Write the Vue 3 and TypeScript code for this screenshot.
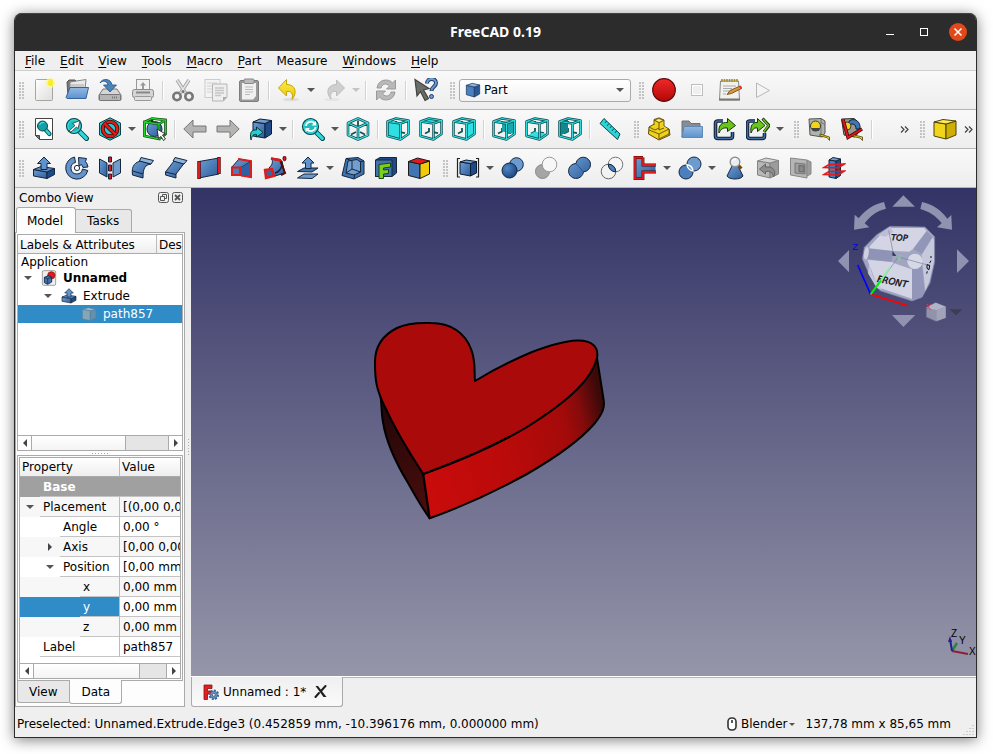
<script setup lang="ts">
import { ref } from 'vue'

interface Tool {
  kind: 'grip' | 'sep' | 'btn' | 'combo' | 'more' | 'space'
  icon?: string
  label?: string
  menu?: boolean
  off?: boolean
}

const btn = (icon: string, label: string, menu = false, off = false): Tool => ({ kind: 'btn', icon, label, menu, off })
const sep: Tool = { kind: 'sep' }
const grip: Tool = { kind: 'grip' }
const more: Tool = { kind: 'more', label: 'More tools' }
const space: Tool = { kind: 'space' }

const DARK = '#15263d'

/* Solid cube seen from the front right */
const cube = (front: string, top: string, side: string, line: string) =>
  `<g stroke="${line}" stroke-width="1.1" stroke-linejoin="round"><path fill="${front}" d="M2 5L14 7.500V22.500L2 19Z"/><path fill="${side}" d="M14 7.500L22 4.500V18L14 22.500Z"/><path fill="${top}" d="M2 5L11 2L22 4.500L14 7.500Z"/></g>`

/* Wireframe cube with one highlighted face */
const wire = (face: string, fill = '#30dfe1') => {
  const back = 'M10 4V7M10 11V14.500L6 16.500M14 15.200L19 16.200'
  const edges = 'M1.500 4.500L14.500 6.500V22.500L1.500 19ZM14.500 6.500L22.500 3.500V17L14.500 22.500M1.500 4.500L10 1.500L22.500 3.500'
  return `<path d="${back}" fill="none" stroke="#0d5557" stroke-width="1.800"/>` +
    `<path d="${face}" fill="${fill}"/><path d="${edges}" fill="none" stroke="#0a4c4f" stroke-width="2.500" stroke-linejoin="round"/><path d="${edges}" fill="none" stroke="#2fdadc" stroke-width="1.100"/>`
}

const lens = (cx: number, cy: number, r: number, inner: string) =>
  `<path d="M${cx + r - 2} ${cy + r - 2}L21.500 21.500" stroke="#06484a" stroke-width="5" stroke-linecap="round"/><path d="M${cx + r - 2} ${cy + r - 2}L21.300 21.300" stroke="#2bdadd" stroke-width="3.200" stroke-linecap="round"/><circle cx="${cx}" cy="${cy}" r="${r}" fill="#1fbcc0" stroke="#06484a" stroke-width="1.200"/><circle cx="${cx}" cy="${cy}" r="${r - 1.4}" fill="none" stroke="#3fe3e5" stroke-width=".9"/>${inner}`

const icons: Record<string, string> = {
  new: '<rect x="3.500" y="1.500" width="17" height="21" rx="1" fill="url(#gPaper)" stroke="#a5a5a2"/><circle cx="18.500" cy="5" r="5" fill="#fff99a" opacity=".7"/><circle cx="18.500" cy="5" r="3" fill="#f8ee20"/>',
  open: '<path d="M2 4L4 2H10L12 4H20V19H3Z" fill="#777" stroke="#555"/><path d="M5 4L21 1.500L20 12H5Z" fill="#e9e9e9" stroke="#888"/><path d="M6 7H19M6 9H19" stroke="#aaa"/><path d="M1 19.500L5 9.500H23.500L21 20.500H2Z" fill="url(#gBlueLight)" stroke="#33629c"/>',
  save: '<path d="M5 11H19L23 17V22H1V17Z" fill="#d6d6d6" stroke="#777"/><rect x="1.500" y="16.500" width="21" height="6" rx="1" fill="#b5b5b5" stroke="#777"/><path d="M14 19.500H20" stroke="#777" stroke-width="2" stroke-dasharray="1 1"/><path d="M2 5C4 0 13 0 14 7H18.500L12 14L5.500 7H10C9 3 5 2 2 5Z" fill="#4b83bb" stroke="#265080" stroke-width=".8"/>',
  print: '<rect x="5.500" y="1.500" width="13" height="11" fill="#f2f2f2" stroke="#999"/><path d="M12 4L15 7.500H13V11H11V7.500H9Z" fill="#999"/><rect x="1.500" y="11.500" width="21" height="8" rx="2" fill="#d5d5d5" stroke="#8c8c8c"/><path d="M5 14.500H19" stroke="#888" stroke-width="2"/><rect x="3.500" y="18.500" width="17" height="4" rx="1" fill="#e0e0e0" stroke="#999"/>',
  cut: '<path d="M6 2L14.500 15M18 2L9.500 15" stroke="#a3a3a3" stroke-width="3.400"/><path d="M6 2L14.500 15M18 2L9.500 15" stroke="#e4e4e4" stroke-width="1.600"/><circle cx="6" cy="18.500" r="3.700" fill="none" stroke="#777" stroke-width="2.600"/><circle cx="18" cy="18.500" r="3.700" fill="none" stroke="#777" stroke-width="2.600"/><circle cx="12" cy="13.500" r="1.500" fill="#777"/>',
  copy: '<rect x="1" y="1.500" width="15" height="18" fill="#f3f3f3" stroke="#ccc"/><path d="M3 5H13M3 8H13M3 11H8M3 14H8" stroke="#d0d0d0"/><path d="M8.500 6H23V19L19.500 23H8.500Z" fill="#eee" stroke="#b5b5b5"/><path d="M11 10H20M11 12.500H20M11 15H20M11 17.500H17" stroke="#c6c6c6" stroke-width="1.500"/><path d="M19 23V19H23Z" fill="#aaa"/>',
  paste: '<rect x="2.500" y="2.500" width="19" height="21" rx="1.500" fill="#9a9a9a" stroke="#7d7d7d"/><path d="M5 5H19V18L16 21.500H5Z" fill="#f0f0f0"/><rect x="7" y="1" width="10" height="4.500" rx="1" fill="#bbb" stroke="#888"/><path d="M8 9H16M8 11.500H16M8 14H16M8 16.500H13" stroke="#bbb"/>',
  undo: '<ellipse cx="14" cy="21.500" rx="8" ry="1.800" fill="#ddd"/><path d="M1.500 10L9.500 1.500V6.500C18 6.500 21 14 15 21.500C16.500 15 14 13 9.500 13.500V18Z" fill="url(#gYellow)" stroke="#c6a405"/>',
  redo: '<ellipse cx="10" cy="21.500" rx="8" ry="1.500" fill="#e4e4e4"/><path d="M22.500 10L14.500 2V6.500C6 6.500 3 14 9 21C7.500 15 10 13 14.500 13.500V18Z" fill="#cfcfcf" stroke="#bdbdbd"/>',
  refresh: '<path d="M3 10C4 1 15 0 18.500 5L21.500 2V11H12.500L15.500 8C12 4.500 8 6 7 10Z" fill="#b9b9b9" stroke="#999"/><path d="M21 14C20 23 9 24 5.500 19L2.500 22V13H11.500L8.500 16C12 19.500 16 18 17 14Z" fill="#b9b9b9" stroke="#999"/>',
  whats: '<path d="M1 1.500L15 10.500L9.500 12L14.500 20.500L11 22.500L6.500 13.500L3 18Z" fill="#6a6d68" stroke="#3f423d" stroke-width="1.200"/><path d="M13 5.500C13 -.5 22 -.5 22 5C22 9 17.500 8.500 17.500 13" fill="none" stroke="#1c3e6a" stroke-width="4"/><path d="M13 5.500C13 -.5 22 -.5 22 5C22 9 17.500 8.500 17.500 12.500" fill="none" stroke="#6d9bd0" stroke-width="2"/><circle cx="17.500" cy="18.500" r="2" fill="#6d9bd0" stroke="#1c3e6a"/>',
  part: cube('#4a80bd', '#8fb3dc', '#2a5796', '#1b3a63'),
  record: '<circle cx="12" cy="12" r="11.300" fill="url(#gRed)" stroke="#5d0a0a" stroke-width="1.200"/>',
  stop: '<rect x="6.500" y="6.500" width="11" height="11" fill="#efefef" stroke="#bdbdbd"/><rect x="7.500" y="7.500" width="9" height="9" fill="none" stroke="#fff"/>',
  macros: '<path d="M2.500 3H20.500L21.500 22H1.500Z" fill="#f1f1ee" stroke="#888a85"/><path d="M1 21.500H22" stroke="#777" stroke-width="2"/><path d="M4 1V4M6.500 1V4M9 1V4M11.500 1V4M14 1V4M16.500 1V4M19 1V4" stroke="#a8902a" stroke-width="1.600"/><path d="M5 8H18M5 10.500H14M5 13H12M5 16H8" stroke="#aaa"/><path d="M9 16.500L12 12.500L22 8L23.500 10.500L13.500 15.500Z" fill="#d9963a" stroke="#6b4410" stroke-width=".8"/><path d="M21 8.500L23 7.500L24 10L22.500 11Z" fill="#e03030"/>',
  play: '<path d="M5.500 5L18.500 12.500L5.500 19.500Z" fill="#f4f4f4" stroke="#b8b8b8"/>',

  fitall: '<path d="M3.500 1.500H20.500V22.500H7.500L3.500 18.500Z" fill="#fff" stroke="#444"/><path d="M3.500 18.500H7.500V22.500Z" fill="#777" stroke="#444"/><path d="M13 12L17.500 17" stroke="#06484a" stroke-width="4.200" stroke-linecap="round"/><path d="M13 12L17.300 16.800" stroke="#2bd5d8" stroke-width="2.600" stroke-linecap="round"/><circle cx="10.500" cy="9" r="5" fill="#17a0a4" stroke="#06484a"/><path d="M7.500 8A4 4 0 0 1 12 5.500" fill="none" stroke="#56eef0"/>',
  fitsel: lens(9, 9, 7.500, '<path d="M4 14L10 8.500L7.500 6.500L15 3.500L13 11.500L11.500 10L6 15Z" fill="#fff" stroke="#222" stroke-width=".7"/>'),
  style: '<path d="M12 .8L22.500 6V18L12 23.200L1.500 18V6Z" fill="#25c8cc" stroke="#064446"/><circle cx="12" cy="12" r="7.300" fill="none" stroke="#3a0505" stroke-width="4"/><circle cx="12" cy="12" r="7.300" fill="none" stroke="#e01b1b" stroke-width="2.500"/><path d="M7 7L17 17" stroke="#3a0505" stroke-width="4"/><path d="M6.500 6.500L17.500 17.500" stroke="#e01b1b" stroke-width="2.500"/>',
  bbox: '<circle cx="11.500" cy="12" r="7.500" fill="url(#gBlue)" stroke="#12294a"/><path d="M1.500 5L16 7V22L1.500 19ZM1.500 5L9 1.500L22.500 3L16 7M22.500 3V17L16 22M9 1.500V5" fill="none" stroke="#06400a" stroke-width="2.600"/><path d="M1.500 5L16 7V22L1.500 19ZM1.500 5L9 1.500L22.500 3L16 7M22.500 3V17L16 22" fill="none" stroke="#22d52b" stroke-width="1.300"/><path d="M14 12L22.500 17L19.500 18L22.500 22L20.500 23.500L18 19.500L15.500 21.500Z" fill="#fff" stroke="#222" stroke-width=".9"/>',
  back: '<path d="M.8 12L10 3V9H23V15H10V21Z" fill="#b4b4b2" stroke="#777" stroke-linejoin="round"/>',
  forward: '<path d="M23.200 12L14 3V9H1V15H14V21Z" fill="#b4b4b2" stroke="#777" stroke-linejoin="round"/>',
  link: '<g stroke="#0b1d36" stroke-width="1"><path fill="url(#gBlue)" d="M4 5L16 6.500V21L4 19Z"/><path fill="#204a87" d="M16 6.500L22.500 3.500V17L16 21Z"/><path fill="#729fcf" d="M4 5L11 2L22.500 3.500L16 6.500Z"/></g><path d="M2 23C0 14 4 12.500 7.500 13V10L14 15.500L7.500 20V17.500C4 17 3 19 2 23Z" fill="#24cdd0" stroke="#04393b"/>',
  sync: lens(9.500, 9.500, 8, '<path d="M5 9C5.500 4 12 3.500 13.500 7M14.500 10C14 15 7.500 15 6 12" fill="none" stroke="#fff" stroke-width="1.800"/><path d="M15 4V8.500H10.500ZM4.500 15V11H9Z" fill="#fff"/>'),
  iso: '<path d="M12 3.500V9M10 15L5 17.500M14 15L19 17.500" fill="none" stroke="#0d5557" stroke-width="1.800"/><path d="M12 1.500L22 6V18L12 22.500L2 18V6ZM2 6L12 10.500L22 6M12 10.500V22.500" fill="none" stroke="#0a4c4f" stroke-width="2.600" stroke-linejoin="round"/><path d="M12 1.500L22 6V18L12 22.500L2 18V6ZM2 6L12 10.500L22 6M12 10.500V22.500" fill="none" stroke="#43dfe1" stroke-width="1.200"/>',
  vfront: wire('M1.500 4.500L14.500 6.500V22.500L1.500 19Z'),
  vtop: wire('M1.500 4.500L10 1.500L22.500 3.500L14.500 6.500Z'),
  vright: wire('M14.500 6.500L22.500 3.500V17L14.500 22.500Z'),
  vrear: wire('M10 4L22.500 5V17L10 14.500Z', '#18a8ab'),
  vbottom: wire('M1.500 19L10 14.500L22.500 17L14.500 22.500Z'),
  vleft: wire('M1.500 4.500L10 2V14.500L1.500 19Z', '#12888c'),
  measure: '<path d="M6 1.500L22 17L19.500 22.500L2 6.500Z" fill="#2fd3d6" stroke="#06484a" stroke-linejoin="round"/><path d="M8.500 4L7 6M11 6.500L9 9M13.500 9L12 11M16 11.500L14 14M18.500 14L17 16" stroke="#06484a" stroke-width=".9" fill="none"/>',
  group: '<path d="M2 10L9 6L13 8V13L22 12L23 18L12 23L1.500 17Z" fill="#f0d21c" stroke="#5f4f02"/><path d="M7 3L12 1L17 3V10L22 12V17L12 22V13L7 10Z" fill="#f0d21c"/><path d="M7 8V2.500L12 .8L17 3V9L22 12V17L12 22V17L2 13M12 5.500V13L17 11M7 3L12 5.500L17 3M2 10L8 13L12 11M12 17L22 12" fill="none" stroke="#5f4f02" stroke-width=".9"/><path d="M7.500 3L12 1.500L16.500 3.500L12 5.500Z" fill="#fff27a" stroke="#5f4f02" stroke-width=".8"/>',
  folder: '<path d="M2 20V4H9L11 6.500H20V10H5Z" fill="#8a8c8e" stroke="#6d7176"/><path d="M4 9.500H22.500V20.500H2Z" fill="url(#gBlueLight)" stroke="#6288b5"/>',
  export: '<path d="M10 4H5Q2.500 4 2.500 6.500V19Q2.500 21.500 5 21.500H17Q19.500 21.500 19.500 19V15" fill="none" stroke="#0f1e30" stroke-width="3.600"/><path d="M10 4H5Q2.500 4 2.500 6.500V19Q2.500 21.500 5 21.500H17Q19.500 21.500 19.500 19V15" fill="none" stroke="#3f6da3" stroke-width="1.500"/><path d="M6 16C5 8 9 5 14.500 5.500V1.500L22.500 8.500L14.500 14.500V11C10 10.500 8 12 6 16Z" fill="#69c41b" stroke="#17330a" stroke-width="1"/>',
  exports: '<path d="M9 4H4Q1.500 4 1.500 6.500V19Q1.500 21.500 4 21.500H16Q18.500 21.500 18.500 19V16" fill="none" stroke="#0f1e30" stroke-width="3.600"/><path d="M9 4H4Q1.500 4 1.500 6.500V19Q1.500 21.500 4 21.500H16Q18.500 21.500 18.500 19V16" fill="none" stroke="#3f6da3" stroke-width="1.500"/><path d="M5 16C4 8 7 5 11.500 5.500V1.500L19 8.500L11.500 14.500V11C8 10.500 7 12 5 16Z" fill="#69c41b" stroke="#17330a"/><path d="M16.500 1.500L23 8.500L18 15" fill="none" stroke="#17330a" stroke-width="3"/><path d="M17 2L22.700 8.500L18 14.500" fill="none" stroke="#69c41b" stroke-width="1.400"/>',
  tape: '<path d="M2 2L14 1.500L18 4V16L15 20L3 18Z" fill="#b0b3ae" stroke="#55574f"/><path d="M14 1.500V5L18 8M14 5V18" stroke="#777" fill="none"/><circle cx="8.500" cy="9" r="5" fill="#f1d51a" stroke="#3c3d39"/><path d="M4 11H13L12 14H6Z" fill="#444"/><path d="M13 17L22.500 20V23.500L20 20.500L13 19Z" fill="#f4da1f" stroke="#4d4204" stroke-width=".8"/>',
  tapeangle: '<path d="M1.500 2L14 1.500L18 5V16L15 20L4 18Z" fill="#96998f" stroke="#33352f"/><path d="M9 4C15 0 21 5 20 12L16 12C16 7 13 6 9 8Z" fill="#3f76b6" stroke="#10233d"/><circle cx="7" cy="9" r="4" fill="#f1d51a" stroke="#3c3d39"/><path d="M3 2.500L8 20.500L22 12" fill="none" stroke="#480505" stroke-width="3.400"/><path d="M3 2.500L8 20.500L22 12" fill="none" stroke="#dd1818" stroke-width="2"/><path d="M14 18L22.500 20V23.500L20 21L13 19.500Z" fill="#f4da1f" stroke="#4d4204" stroke-width=".8"/>',
  yellowbox: '<g stroke="#4d4204" stroke-width="1" stroke-linejoin="round"><path fill="#f0d51c" d="M1 5L13 7V22L1 19Z"/><path fill="#cfae06" d="M13 7L23 4V18L13 22Z"/><path fill="#fbea5a" d="M1 5L10 2.500L23 4L13 7Z"/></g>',

  extrude: `<g stroke="${DARK}" stroke-width="1" stroke-linejoin="round"><path fill="url(#gBlue)" d="M1.500 13.500L15 16V22.500L1.500 20Z"/><path fill="#204a87" d="M15 16L22.500 12.500V18.500L15 22.500Z"/><path fill="#5b8dc5" d="M1.500 13.500L9 10.500L22.500 12.500L15 16Z"/><path fill="#5e93ce" d="M12 1L18.500 7.500H15V13.500H9V7.500H5.500Z"/></g>`,
  revolve: `<g fill="#6494cb" stroke="${DARK}"><path d="M9.500 1A11.200 11.200 0 1 0 22.800 14.500L17.500 13A5.800 5.800 0 1 1 10.500 6.500Z"/><path d="M13.500 1.500L21.500 2.500L20.500 5.500A11 11 0 0 1 23 11L18 11.500L16.500 8.500L14 10Z"/></g><circle cx="12" cy="12" r="2.600" fill="#fff" stroke="${DARK}"/>`,
  mirror: `<g stroke="${DARK}" stroke-width="1"><path d="M1.500 3L9 7V21L1.500 17Z" fill="url(#gBlue)"/><path d="M15 7L22.500 3V17L15 21Z" fill="#6f9dd0"/><path d="M10.500 1H13.500V6H10.500ZM10.500 9H13.500V15H10.500ZM10.500 18H13.500V23H10.500Z" fill="#e01b1b"/></g>`,
  fillet: `<g stroke="${DARK}" stroke-linejoin="round"><path d="M1.500 19C0 9 5 6 10 5L20 8C14 9 12 12 12 22Z" fill="url(#gBlue)"/><path d="M10 1.500L22.500 4.500L20 8L8.500 5Z" fill="#8fb4de"/><path d="M1.500 15L12 18" fill="none"/></g>`,
  chamfer: `<g stroke="${DARK}" stroke-linejoin="round"><path d="M1.500 16L10 5L20 7.500L12 18V22L1.500 19Z" fill="url(#gBlue)"/><path d="M11 1.500L23 4.500L20 8L9 5Z" fill="#8fb4de"/><path d="M1.500 16L12 18.500" fill="none"/></g>`,
  ruled: `<path d="M2 5.500L22 2V18L2 22Z" fill="url(#gBlue)" stroke="${DARK}"/><path d="M2 5V23M22 1V18" stroke="#3f0505" stroke-width="3.400"/><path d="M2 5.500V22.500M22 1.500V17.500" stroke="#e01b1b" stroke-width="2.200"/>`,
  loft: '<path d="M2 11L9 3L20 5V21L10 18Z" fill="url(#gBlue)" stroke="#10233d"/><path d="M8 3L21 5V21L11 19.500" fill="none" stroke="#e01b1b" stroke-width="2"/><path d="M10 12L20 6" stroke="#10233d"/><path d="M10 12L20 6V20L10 18.500Z" fill="#2f61a2"/><rect x="2" y="11.500" width="8" height="7.500" fill="#4a7cb8" stroke="#e01b1b" stroke-width="2"/>',
  sweep: '<path d="M6 12C9 9 10 7 9 3L19 5C20 10 21 14 22 17L12 20Z" fill="url(#gBlue)" stroke="#10233d"/><path d="M8 2.500L17 4L22 17L18 19" fill="none" stroke="#5a0808" stroke-width="2"/><path d="M8 2.500L18 4.500" stroke="#e01b1b" stroke-width="2.400"/><path d="M2 14L9 13L11 20L3 22Z" fill="#3465a4" stroke="#e01b1b" stroke-width="2.400"/><path d="M12 17C16 16 18 13 19 9" fill="none" stroke="#10233d" stroke-width="1.400"/><ellipse cx="21.500" cy="2.500" rx="1.500" ry="2.300" fill="#e01b1b" stroke="#4a0505"/>',
  offset: `<g stroke="${DARK}" stroke-linejoin="round"><path d="M1.500 22L8 18H22L16 22.500Z" fill="#6c9bd0"/><path d="M1.500 15.500L8 12H22L16 16Z" fill="#3f73b0"/><path d="M12 1L18 7H15V12.500H9.500V7H6Z" fill="#5e93ce"/></g>`,
  thickness: `<g stroke="${DARK}" stroke-linejoin="round"><path d="M5 2.500L17 1.500L23 5V18L13 23L1 19.500Z" fill="#3f73b0"/><path d="M5 2.500L15 6.500L23 5M15 6.500L13 23" fill="none"/><path d="M7 5L16 3.500L19.500 6V16L13 19L5 17Z" fill="#729fcf"/><path d="M11 5V13L5 17M11 13L19.500 16" fill="none"/></g>`,
  projection: `<g stroke="${DARK}"><path d="M1.500 4L6 1.500H22.500V17L18 20.500H1.500Z" fill="#204a87"/><path d="M1.500 4H18V20.500H1.500Z" fill="#4173ae"/></g><path d="M5 8.500L16.500 7V11L9.500 12V14L14.500 13.500V17.500L9.500 18V22.500H5Z" fill="#7bcf1f" stroke="#1e4405"/>`,
  colors: '<g stroke="#1a1a1a" stroke-width="1" stroke-linejoin="round"><path fill="#4175b4" d="M1.500 5.500L13 8V22.500L1.500 19.500Z"/><path fill="#f0cc08" d="M13 8L22.500 5V18L13 22.500Z"/><path fill="#e81818" d="M1.500 5.500L10.500 2L22.500 5L13 8Z"/></g>',
  compound: `<g stroke="#0b1d36"><path fill="url(#gBlue)" d="M4 6L14.500 7.500V20L4 18Z"/><path fill="#204a87" d="M14.500 7.500L20.500 5.500V17L14.500 20Z"/><path fill="#729fcf" d="M4 6L10 4L20.500 5.500L14.500 7.500Z"/></g><path d="M4 2.500H1.500V21H4M20 2.500H22.500V21H20" fill="none" stroke="#222" stroke-width="1.200"/>`,
  boolean: `<circle cx="15.500" cy="8.500" r="6.800" fill="#6c9bd0" stroke="${DARK}"/><circle cx="8.500" cy="14.500" r="7.500" fill="url(#gBall)" stroke="${DARK}"/>`,
  cutout: '<circle cx="8.500" cy="15.500" r="7" fill="#a5a5a5" stroke="#888"/><circle cx="15.500" cy="8.500" r="7.300" fill="#f7f7f7" stroke="#999"/>',
  union: `<path d="M9 7.500A7.300 7.300 0 1 1 16.500 15.800A7.500 7.500 0 1 1 9 7.500Z" fill="url(#gBlue)" stroke="${DARK}"/><path d="M9 7.500L16.500 15.800" stroke="#204a87" stroke-width=".8"/>`,
  common: `<circle cx="15.500" cy="8.500" r="7.300" fill="#f6f6f6" stroke="#777"/><circle cx="8.500" cy="15.500" r="7.300" fill="#f2f2f2" fill-opacity=".7" stroke="#666"/><path d="M8.300 8.200A7.300 7.300 0 0 1 15.700 15.800A7.300 7.300 0 0 1 8.300 8.200Z" fill="#4b7fbd" stroke="${DARK}"/>`,
  joint: '<path d="M1.500 1.500H10V9H22.500V16H10V22.500H1.500Z" fill="url(#gBlue)"/><path d="M10 1.500H2V22.500H10V16H23M10 1.500V9H23" fill="none" stroke="#4a0505" stroke-width="2.800"/><path d="M10 1.500H2V22.500H10V16H23M10 1.500V9H23" fill="none" stroke="#e01b1b" stroke-width="1.800"/>',
  split: `<circle cx="16" cy="8" r="7" fill="#6c9bd0" stroke="${DARK}"/><circle cx="8" cy="16" r="7" fill="#4b7fbd" stroke="${DARK}"/><path d="M9 8.800A7 7 0 0 1 15 15A7 7 0 0 1 9 8.800Z" fill="#729fcf" stroke="#fff" stroke-width="1.400"/>`,
  check: '<path d="M9 10H15L20 20C18 24 6 24 4 20Z" fill="url(#gBlue)" stroke="#15263d"/><path d="M15 9L18.500 12.500" stroke="#7a4b06" stroke-width="3"/><circle cx="12" cy="6" r="4.800" fill="#e9eef2" stroke="#8a8f93" stroke-width="1.400"/><path d="M9.500 5C10 3 12 2.500 13 3" stroke="#fff" stroke-width="1.500" fill="none"/>',
  defeature: '<g stroke="#838383"><path fill="#b8b8b8" d="M1.500 5L14 7V22L1.500 19Z"/><path fill="#9c9c9c" d="M14 7L22.500 4.500V18L14 22Z"/><path fill="#d2d2d2" d="M1.500 5L10 2L22.500 4.500L14 7Z"/></g><path d="M3.500 13L9.500 8V11C17 10 21 15 17.500 21C17 16 14 15 9.500 15.500V18Z" fill="#8c8c8c" stroke="#666"/>',
  crosssec: '<path d="M1.500 2L18 4V22L1.500 19Z" fill="#b5b5b5" stroke="#888"/><path d="M18 4L22 6V18L18 20Z" fill="#9c9c9c" stroke="#888"/><path d="M6 7L16 8V18L6 17Z" fill="#9e9e9e" stroke="#777"/><path d="M10 9.500L15 10V16L10 15.500Z" fill="#888" stroke="#666"/>',
  sections: `<g stroke="${DARK}"><path d="M7 4L14 5V22.500L7 21Z" fill="#4a7fbd"/><path d="M14 5L18.500 3V19.500L14 22.500Z" fill="#204a87"/><path d="M7 4L11 1.500L18.500 3L14 5Z" fill="#729fcf"/></g><path d="M22.500 8L7 8.500L2 11.500L16 12ZM22.500 15L7 15.500L2 18.500L16 19Z" fill="#3465a4" fill-opacity=".4" stroke="#e01b1b" stroke-width="1.500"/>`,
  doc: '<rect x="2" y="1" width="20" height="22" rx="2" fill="#efefef" stroke="#777"/><circle cx="15.500" cy="8" r="5.500" fill="#df1c1c" stroke="#7e0c0c"/><path d="M5 11L11 8.500L16 11V18L10 21.500L5 19Z" fill="#3f73b0" stroke="#10233d" stroke-width="1.300"/><path d="M5 11L10 13L16 11M10 13V21" stroke="#10233d" fill="none"/>',
  ghost: '<g stroke="#567f9c" stroke-width="1"><path fill="#84a6bb" d="M2 5L14 7V22L2 19.500Z"/><path fill="#6590ab" d="M14 7L22.500 5V18L14 22Z"/><path fill="#9fbccd" d="M2 5L11 2.500L22.500 5L14 7Z"/></g>',
}

const toolbars: { name: string; items: Tool[] }[] = [
  {
    name: 'File',
    items: [
      grip, btn('new', 'New'), btn('open', 'Open'), btn('save', 'Save'), btn('print', 'Print'), sep,
      btn('cut', 'Cut'), btn('copy', 'Copy', false, true), btn('paste', 'Paste'), sep,
      btn('undo', 'Undo', true), btn('redo', 'Redo', true, true), sep, btn('refresh', 'Refresh'), sep,
      btn('whats', "What's this?"), grip, { kind: 'combo' }, grip,
      btn('record', 'Record macro'), btn('stop', 'Stop macro', false, true), btn('macros', 'Macros'), btn('play', 'Execute macro', false, true),
    ],
  },
  {
    name: 'View',
    items: [
      grip, btn('fitall', 'Fit all'), btn('fitsel', 'Fit selection'), btn('style', 'Draw style', true), btn('bbox', 'Bounding box'), sep,
      btn('back', 'Back'), btn('forward', 'Forward'), btn('link', 'Go to linked object', true), sep,
      btn('sync', 'Sync view', true), btn('iso', 'Isometric'), sep,
      btn('vfront', 'Front'), btn('vtop', 'Top'), btn('vright', 'Right'), sep,
      btn('vrear', 'Rear'), btn('vbottom', 'Bottom'), btn('vleft', 'Left'), sep,
      btn('measure', 'Measure distance'), grip,
      btn('group', 'Create part'), btn('folder', 'Create group'), btn('export', 'Make link'), btn('exports', 'Make sub-link', true), grip,
      btn('tape', 'Measure linear'), btn('tapeangle', 'Measure angular'), sep, space, more, grip, btn('yellowbox', 'Box'), more,
    ],
  },
  {
    name: 'Part',
    items: [
      grip, btn('extrude', 'Extrude'), btn('revolve', 'Revolve'), btn('mirror', 'Mirror'), btn('fillet', 'Fillet'), btn('chamfer', 'Chamfer'),
      btn('ruled', 'Ruled surface'), btn('loft', 'Loft'), btn('sweep', 'Sweep'), btn('offset', 'Offset', true),
      btn('thickness', 'Thickness'), btn('projection', 'Projection'), btn('colors', 'Color per face'), grip,
      btn('compound', 'Compound', true), btn('boolean', 'Boolean'), btn('cutout', 'Cut shapes'), btn('union', 'Union'), btn('common', 'Intersection'),
      btn('joint', 'Join', true), btn('split', 'Split', true), btn('check', 'Check geometry'), btn('defeature', 'Defeaturing'),
      btn('crosssec', 'Section'), btn('sections', 'Cross-sections'),
    ],
  },
]

const menus = ['File', 'Edit', 'View', 'Tools', 'Macro', 'Part', 'Measure', 'Windows', 'Help']

const tree = [
  { level: 0, label: 'Unnamed', icon: 'doc', open: true, bold: true, selected: false },
  { level: 1, label: 'Extrude', icon: 'extrude', open: true, bold: false, selected: false },
  { level: 2, label: 'path857', icon: 'ghost', open: false, bold: false, selected: true },
]

const properties = [
  { level: 0, name: 'Placement', value: '[(0,00 0,0', arrow: 'down' },
  { level: 1, name: 'Angle', value: '0,00 °', arrow: '' },
  { level: 1, name: 'Axis', value: '[0,00 0,00', arrow: 'right' },
  { level: 1, name: 'Position', value: '[0,00 mm', arrow: 'down' },
  { level: 2, name: 'x', value: '0,00 mm', arrow: '' },
  { level: 2, name: 'y', value: '0,00 mm', arrow: '' },
  { level: 2, name: 'z', value: '0,00 mm', arrow: '' },
  { level: 0, name: 'Label', value: 'path857', arrow: '' },
]

const selectedProperty = ref('y')
const panelTab = ref('Model')
const propertyTab = ref('Data')
const workbench = ref('Part')
</script>

<template>
  <div class="window">
    <svg class="defs" aria-hidden="true">
      <defs>
        <linearGradient id="gBlue" x1="0" y1="0" x2="1" y2="1"><stop offset="0" stop-color="#6f9fd3" /><stop offset="1" stop-color="#2c5b9b" /></linearGradient>
        <linearGradient id="gBlueLight" x1="0" y1="0" x2="0" y2="1"><stop offset="0" stop-color="#93b9e3" /><stop offset="1" stop-color="#5c92cd" /></linearGradient>
        <linearGradient id="gPaper" x1="0" y1="0" x2="1" y2="1"><stop offset="0" stop-color="#fff" /><stop offset="1" stop-color="#dededc" /></linearGradient>
        <linearGradient id="gYellow" x1="0" y1="0" x2="0" y2="1"><stop offset="0" stop-color="#fbef4e" /><stop offset="1" stop-color="#e9c404" /></linearGradient>
        <linearGradient id="gRed" x1="0" y1="0" x2="0" y2="1"><stop offset="0" stop-color="#ef2929" /><stop offset="1" stop-color="#b40606" /></linearGradient>
        <radialGradient id="gBall" cx=".35" cy=".35" r=".7"><stop offset="0" stop-color="#5288c6" /><stop offset="1" stop-color="#1c4580" /></radialGradient>
      </defs>
    </svg>

    <header class="titlebar">
      <h1>FreeCAD 0.19</h1>
      <div class="winbtns">
        <button aria-label="Minimize"><svg viewBox="0 0 18 18"><path d="M5 11.500H13" stroke="#fff" /></svg></button>
        <button aria-label="Maximize"><svg viewBox="0 0 18 18"><rect x="5.500" y="5.500" width="7" height="7" fill="none" stroke="#fff" /></svg></button>
        <button class="close" aria-label="Close window"><svg viewBox="0 0 18 18"><path d="M5.500 5.500L12.500 12.500M12.500 5.500L5.500 12.500" stroke="#fff" stroke-width="1.500" /></svg></button>
      </div>
    </header>

    <nav class="menubar">
      <button v-for="m in menus" :key="m"><template v-if="m !== 'Measure'"><u>{{ m[0] }}</u>{{ m.slice(1) }}</template><template v-else>{{ m }}</template></button>
    </nav>

    <div v-for="bar in toolbars" :key="bar.name" class="toolbar" role="toolbar" :aria-label="bar.name">
      <template v-for="(t, i) in bar.items" :key="i">
        <span v-if="t.kind === 'grip'" class="grip" :class="{ first: i === 0 }"></span>
        <span v-else-if="t.kind === 'sep'" class="sep"></span>
        <span v-else-if="t.kind === 'space'" class="space"></span>
        <button v-else-if="t.kind === 'more'" class="more" :aria-label="t.label">
          <svg viewBox="0 0 9 7"><path d="M1 .5L4 3.500L1 6.500M5 .5L8 3.500L5 6.500" fill="none" stroke="#444" stroke-width="1.200" /></svg>
        </button>
        <label v-else-if="t.kind === 'combo'" class="combo">
          <svg class="i16" viewBox="0 0 24 24" aria-hidden="true" v-html="icons.part"></svg>
          <select v-model="workbench" aria-label="Workbench"><option>Part</option></select>
          <i class="tri"></i>
        </label>
        <button v-else class="tool" :aria-label="t.label" :disabled="t.off">
          <span class="face"><svg viewBox="0 0 24 24" v-html="icons[t.icon ?? '']"></svg></span>
          <span v-if="t.menu" class="drop"><i class="tri" :class="{ faint: t.off }"></i></span>
        </button>
      </template>
    </div>

    <main class="main">
      <aside class="dock">
        <div class="dockhead">
          <h2>Combo View</h2>
          <button aria-label="Float panel"><svg viewBox="0 0 11 11"><rect x=".5" y=".5" width="10" height="10" rx="2" fill="none" stroke="#555" /><path d="M4.500 4V2.500H8.500V6.500H7M2.500 4.500H6.500V8.500H2.500Z" fill="none" stroke="#555" /></svg></button>
          <button aria-label="Close panel"><svg viewBox="0 0 11 11"><rect x=".5" y=".5" width="10" height="10" rx="2" fill="none" stroke="#555" /><path d="M3 3L8 8M8 3L3 8" stroke="#555" stroke-width="1.800" /></svg></button>
        </div>
        <div class="tabs" role="tablist">
          <button v-for="t in ['Model', 'Tasks']" :key="t" role="tab" :aria-selected="panelTab === t" :class="{ active: panelTab === t }" @click="panelTab = t">{{ t }}</button>
        </div>
        <div class="pane">
          <section class="treeframe">
            <div class="treehead"><span class="c1">Labels &amp; Attributes</span><span class="c2">Des</span></div>
            <div class="app">Application</div>
            <ul class="tree">
              <li v-for="n in tree" :key="n.label" :class="{ sel: n.selected, bold: n.bold }">
                <span v-for="k in n.level" :key="k" class="indent"></span>
                <span class="indent"><i v-if="n.open" class="tri"></i></span>
                <svg class="i16" viewBox="0 0 24 24" aria-hidden="true" v-html="icons[n.icon]"></svg>
                <span>{{ n.label }}</span>
              </li>
            </ul>
            <div class="hscroll"><button aria-label="Scroll left"><i class="tri left"></i></button><span class="thumb"></span><span class="track"></span><button aria-label="Scroll right"><i class="tri right"></i></button></div>
          </section>
          <div class="hsplit"><span></span></div>
          <section class="propouter">
            <div class="propframe">
              <table>
                <thead><tr><th class="pname">Property</th><th>Value</th></tr></thead>
                <tbody>
                  <tr class="base"><td colspan="2"><div class="cell"><span class="indent"></span><span class="txt">Base</span></div></td></tr>
                  <tr v-for="p in properties" :key="p.name" :class="{ sel: selectedProperty === p.name }" @click="selectedProperty = p.name">
                    <td class="pname"><div class="cell"><span v-for="k in p.level" :key="k" class="indent"></span><span class="indent"><i v-if="p.arrow" class="tri" :class="p.arrow"></i></span><span class="txt">{{ p.name }}</span></div></td>
                    <td class="val">{{ p.value }}</td>
                  </tr>
                </tbody>
              </table>
              <div class="hscroll wide"><button aria-label="Scroll left"><i class="tri left"></i></button><span class="thumb"></span><span class="track"></span><button aria-label="Scroll right"><i class="tri right"></i></button></div>
            </div>
          </section>
          <div class="tabs bottom" role="tablist">
            <button v-for="t in ['View', 'Data']" :key="t" role="tab" :aria-selected="propertyTab === t" :class="{ active: propertyTab === t }" @click="propertyTab = t">{{ t }}</button>
          </div>
        </div>
      </aside>
      <div class="vsplit"><span></span></div>

      <section class="work">
        <div class="viewport">
          <svg class="scene" viewBox="191 188 785 488" role="img" aria-label="Extruded heart">
            <defs>
              <linearGradient id="wall" gradientUnits="userSpaceOnUse" x1="424" y1="460" x2="604" y2="415">
                <stop offset="0" stop-color="#c80b0b" /><stop offset=".45" stop-color="#ba0a0a" /><stop offset=".78" stop-color="#a40a0a" /><stop offset=".88" stop-color="#850b0b" /><stop offset="1" stop-color="#3c0909" />
              </linearGradient>
              <linearGradient id="dark" gradientUnits="userSpaceOnUse" x1="380" y1="400" x2="428" y2="510">
                <stop offset="0" stop-color="#210606" /><stop offset="1" stop-color="#4a0d0d" />
              </linearGradient>
            </defs>
            <g stroke="#000" stroke-width="2" stroke-linejoin="round">
              <path fill="url(#dark)" d="M380 394C382 402 381 412 383 422C386 442 396 463 408 483C415 495 422 508 429.700 518.300L423.300 474Z" />
              <path fill="url(#wall)" d="M423.300 474L429.700 518.300C464 506 496 491 527 474C560 455 583 437 595 423C603 413 605 407 603.500 399L597 358C593 372 570 398 527 427C495 446 460 461 423.300 474Z" />
              <path fill="#ab0a0a" d="M475 381C474 372 476 361 471 349C465 333 451 323 431 323C419 322.500 407 323 397 328C383 335 375 346 375 362C375 380 376 388 384 405C395 429 408 451 423.300 474C460 460 495 446 527 427C570 400 592 379 597 358C599 347 592 340 577 340.500C563 341 545 347 532 352C513 360 493 370 475 381Z" />
            </g>
          </svg>

          <svg class="navcube" viewBox="15 6 423 423" role="img" aria-label="Navigation cube">
            <g fill="#9092b0">
              <path d="M187 62L220 28L255 62ZM24 225L57 192V259ZM381 190L417 225L381 261ZM186 387H256L220 423Z" />
              <path d="M162 48L168 68C142 74 120 90 104 112L118 124L72 131L74 86L86 97C106 72 132 54 162 48Z" />
              <path d="M276 48L271 69C296 76 318 89 335 112L321 124L366 131L364 87L352 98C333 72 306 54 276 48Z" />
            </g>
            <path d="M180 121L285 123L314 152V228L300 291L276 334L246 345L150 314L116 262L97 218L103 184L140 146Z" fill="#a2a5c2" stroke="#7f83a8" stroke-width="2" />
            <path d="M184 126H282L290 135L248 190L238 197L192 195L118 187L120 180L150 148Z" fill="#d3d4e4" />
            <path d="M180 122L190 138L166 152L145 146Z" fill="#bcbed6" />
            <path d="M112 221L185 228L205 236L246 250V338L150 306L132 272Z" fill="#d3d4e4" />
            <path d="M308 154L312 162V226L298 286L286 314L278 240L275 206Z" fill="#c6c8dc" />
            <path d="M246 250L276 240L284 318L276 332L246 342Z" fill="#9296b8" />
            <path d="M118 188L190 196L184 227L111 219Z" fill="#8f93b5" />
            <path d="M290 136L307 153L276 204L250 190Z" fill="#9296b8" />
            <circle cx="255" cy="226" r="23" fill="#d6d8e6" /><ellipse cx="109" cy="202" rx="7" ry="19" fill="#cfd1e2" transform="rotate(8 109 202)" />
            <path d="M118 235L129 270L157 312L140 306L114 262Z" fill="#c4c6da" />
            <path d="M176 133L190 202L205 213L300 239M205 213L150 290" fill="none" stroke="#7a7fa0" stroke-width="2" />
            <path d="M188 196L199 210L187 209Z" fill="#30365c" />
            <text class="cubetext" x="183" y="163" font-size="25" transform="rotate(2 183 163)">TOP</text>
            <text class="cubetext" x="140" y="287" font-size="27" transform="rotate(11 140 287)">FRONT</text>
            <path d="M303 210V216M303 224L299 231M291 236L299 238L297 251L291 247ZM292 256L290 263" fill="none" stroke="#0c0c18" stroke-width="3" />
            <path d="M83 237L122 325" stroke="#0000ff" stroke-width="5" /><path d="M122 325L233 359" stroke="#ff0000" stroke-width="5" />
            <path d="M122 325L153 283" stroke="#00f000" stroke-width="6" /><path d="M153 283L179 246" stroke="#8dee9b" stroke-width="6" />
            <g class="axistext" font-size="29"><text x="67" y="192" fill="#0000e8">Z</text><text x="199" y="224" fill="#76df88" font-size="26">Y</text></g>
            <path d="M289 365L317 350L347 362V395L318 406L289 393Z" fill="#9193ab" stroke="#6f7291" stroke-width="2" /><path d="M289 365L317 350L347 362L320 372Z" fill="#b1b3c7" /><path d="M320 372V405L347 395V362Z" fill="#a1a3ba" />
            <text class="axistext" x="287" y="373" fill="#e03c50" font-size="25">X</text>
            <path d="M358 370H397L378 388Z" fill="#3d3c50" />
          </svg>

          <svg class="axes" viewBox="0 0 30 34" role="img" aria-label="Axis cross">
            <path d="M6 23L11 15" stroke="#228a32" stroke-width="2.500" /><path d="M6 23L22 26" stroke="#8e2033" stroke-width="2" /><path d="M6 23L4 11" stroke="#20208e" stroke-width="2" /><path d="M4 8L6 14L2 14Z" fill="#20208e" />
            <g class="axistext" font-size="10"><text x="5" y="9">Z</text><text x="13" y="16">Y</text><text x="23" y="27">X</text></g>
          </svg>
        </div>
        <div class="doctabs">
          <div class="doctab">
            <svg class="i16" viewBox="0 0 16 16" aria-hidden="true"><path d="M1 1H9V4.500H4.500V7H8V10H4.500V15.500H1Z" fill="#df2020" stroke="#8c1010" stroke-width=".8" /><circle cx="10.800" cy="10.800" r="4.300" fill="none" stroke="#3d6294" stroke-width="2" stroke-dasharray="2 1.300" /><circle cx="10.800" cy="10.800" r="3.600" fill="#6d93c4" stroke="#3d6294" stroke-width=".8" /><circle cx="10.800" cy="10.800" r="1.500" fill="#eee" stroke="#28466f" stroke-width=".7" /></svg>
            <span>Unnamed : 1*</span>
            <button aria-label="Close document"><svg viewBox="0 0 13 13"><path d="M1.500 1H4L12.500 12H9.500Z" fill="#1e1e1e" /><path d="M11.500 1L7 6M5 8L1.500 12" stroke="#1e1e1e" stroke-width="2" stroke-linecap="round" /></svg></button>
          </div>
        </div>
      </section>
    </main>

    <footer class="status">
      <span class="msg">Preselected: Unnamed.Extrude.Edge3 (0.452859 mm, -10.396176 mm, 0.000000 mm)</span>
      <button class="navstyle"><svg viewBox="0 0 10 14"><rect x="1" y="1" width="8" height="12" rx="3.500" fill="#fff" stroke="#333" stroke-width="1.600" /><path d="M5 3V6" stroke="#333" stroke-width="1.600" /></svg>Blender<i class="tri small"></i></button>
      <span class="dims">137,78 mm x 85,65 mm</span>
      <svg class="sizegrip" viewBox="0 0 12 12" aria-hidden="true"><path d="M10 1V12M7 4V12M4 7V12M1 10V12" stroke="#aaa" stroke-dasharray="1 2" /></svg>
    </footer>
  </div>
</template>

<style>
body { margin: 0; background: #fff; }
#app { display: flow-root; }
</style>

<style scoped>
.window {
  box-sizing: border-box;
  margin: 13px 16px 16px 14px;
  min-height: calc(100vh - 29px);
  display: flex;
  flex-direction: column;
  background: #efefef;
  border: 1px solid #2b2b2b;
  border-top: 0;
  border-radius: 8px 8px 0 0;
  box-shadow: 0 2px 14px rgba(0, 0, 0, 0.5);
  font: 12px/16px "DejaVu Sans", sans-serif;
  color: #000;
}
.defs { position: absolute; width: 0; height: 0; }
svg { display: block; flex: none; }
button { font: inherit; color: inherit; background: none; border: 0; padding: 0; margin: 0; }
h1, h2 { margin: 0; font: inherit; }
ul { list-style: none; margin: 0; padding: 0; }

.titlebar { height: 38px; display: grid; grid-template-columns: 1fr auto 1fr; align-items: center; background: #2c2c2c; border-radius: 7px 7px 0 0; box-shadow: inset 0 1px #444; }
.titlebar h1 { grid-column: 2; color: #fff; font: bold 14px/18px "Noto Sans", "Open Sans", sans-serif; }
.winbtns { display: flex; justify-content: flex-end; gap: 16px; padding-right: 9px; }
.winbtns svg { width: 18px; height: 18px; }
.close { background: #e2491a; border-radius: 50%; }

.menubar { display: flex; gap: 1px; height: 19px; padding-left: 3px; border-bottom: 1px solid #cfcfcf; }
.menubar button { padding: 0 7px; line-height: 18px; }
.menubar u { text-underline-offset: 2px; }

.toolbar { box-sizing: border-box; height: 39px; display: flex; align-items: center; padding-left: 1px; background: linear-gradient(#f9f9f9, #ededed); border-bottom: 1px solid #b5b5b5; }
.grip { flex: none; width: 5px; height: 17px; margin: 0 3px 0 8px; background: radial-gradient(circle at 1px 1px, #c4c4c4 1px, transparent 1px) 0 0 / 3px 3px; }
.grip.first { margin-left: 3px; }
.sep { flex: none; width: 1px; height: 19px; margin: 0 3px; background: #d2d2d2; box-shadow: 1px 0 #fff; }
.space { flex: 1; }
.more { width: 15px; display: flex; justify-content: center; }
.more svg { width: 9px; height: 7px; }
.tool { flex: none; display: flex; align-items: center; }
.face { width: 33px; display: flex; justify-content: center; }
.face svg { width: 24px; height: 24px; }
.drop { width: 12px; display: flex; justify-content: center; }
.tri { flex: none; width: 0; height: 0; border: 4px solid transparent; border-top-color: #555; border-bottom: 0; }
.tri.faint { border-top-color: #c4c4c4; }
.tri.left { border: 4px solid transparent; border-right-color: #444; border-left: 0; }
.tri.right { border: 4px solid transparent; border-left-color: #444; border-right: 0; }
.tri.small { border-width: 3px 3px 0; }
.i16 { width: 16px; height: 16px; }
.combo { box-sizing: border-box; width: 172px; height: 23px; margin-left: 1px; display: flex; align-items: center; padding: 0 6px 0 5px; border: 1px solid #aaa; border-radius: 3px; background: linear-gradient(#fff, #f1f1f1); }
.combo select { flex: 1; min-width: 0; appearance: none; border: 0; background: none; font: inherit; color: inherit; padding: 0 0 0 3px; }

.main { flex: 1; display: flex; min-height: 0; }
.dock { width: 170px; flex: none; display: flex; flex-direction: column; }
.dockhead { display: flex; align-items: center; gap: 3px; height: 19px; padding: 0 2px 0 4px; }
.dockhead h2 { flex: 1; }
.dockhead svg { width: 11px; height: 11px; }
.tabs { display: flex; align-items: flex-end; height: 25px; padding-left: 1px; }
.tabs button { box-sizing: border-box; height: 23px; padding: 0 12px 0 11px; border: 1px solid #aaa; border-bottom: 0; border-left: 0; border-radius: 0 3px 0 0; background: #e8e8e8; }
.tabs button.active { position: relative; height: 26px; margin-bottom: -1px; padding: 0 12px 0 10px; border-left: 1px solid #aaa; border-radius: 3px 3px 0 0; background: #fdfdfd; }
.pane { flex: 1; display: flex; flex-direction: column; padding: 1px 1px 2px; border: 1px solid #aaa; background: #fdfdfd; }
.treeframe { flex: 1; display: flex; flex-direction: column; border: 1px solid #aaa; background: #fff; overflow: hidden; }
.treehead { display: flex; height: 18px; line-height: 20px; white-space: nowrap; border-bottom: 1px solid #aaa; background: linear-gradient(#fff, #eee); }
.c1 { flex: none; width: 136px; padding-left: 2px; border-right: 1px solid #bbb; }
.c2 { flex: 1; min-width: 0; padding-left: 2px; }
.app { height: 15px; padding-left: 3px; line-height: 16px; }
.tree { flex: 1; }
.tree li { display: flex; align-items: center; height: 18px; line-height: 18px; }
.tree .i16 { margin: 0 6px 0 3px; }
.tree .bold { font-weight: bold; }
.indent { flex: none; width: 20px; display: flex; align-items: center; justify-content: center; }
.tree .sel { background: #308cc6; color: #fff; }

.hscroll { display: flex; height: 14px; border-top: 1px solid #aaa; background: #fff; }
.hscroll button { width: 13px; display: flex; align-items: center; justify-content: center; }
.hscroll .thumb { flex: 93; border: solid #aaa; border-width: 0 1px; background: linear-gradient(#fff, #f4f4f4); }
.hscroll .track { flex: 42; background: #e5e5e5; border-right: 1px solid #aaa; }
.hscroll.wide .thumb { flex: 105; }
.hscroll.wide .track { flex: 26; }
.hsplit { height: 4px; display: flex; justify-content: center; align-items: center; }
.hsplit span { width: 17px; height: 1px; background: repeating-linear-gradient(90deg, #aaa 0 1px, transparent 1px 3px); }
.propouter { border: 1px solid #aaa; padding: 1px; }
.propframe { border: 1px solid #aaa; background: #fff; overflow: hidden; }
table { width: 100%; table-layout: fixed; border-collapse: separate; border-spacing: 0; margin-bottom: 6px; }
th { height: 18px; padding: 0 0 0 2px; font-weight: normal; text-align: left; border-bottom: 1px solid #aaa; background: linear-gradient(#fff, #eee); }
th.pname { width: 97px; border-right: 1px solid #bbb; }
td { height: 20px; padding: 0; white-space: nowrap; overflow: hidden; }
td.pname { border-right: 1px solid #bbb; }
.val { box-sizing: border-box; padding-left: 3px; border-bottom: 1px solid #c4c4c4; }
.cell { display: flex; height: 20px; }
.txt { flex: 1; padding-left: 3px; line-height: 20px; box-shadow: inset 0 -1px #c4c4c4; }
.base td { background: #a0a0a0; color: #fff; font-weight: bold; }
tbody tr:nth-child(even) td { background: #f7f7f7; }
tbody tr.sel .pname { background: #308cc6; color: #fff; }
.tabs.bottom { align-items: flex-start; height: 23px; padding: 0; }
.bottom button { height: 22px; padding: 0 12px 0 11px; border: 1px solid #aaa; border-top: 0; border-right: 0; border-radius: 0 0 0 3px; }
.bottom button.active { height: 24px; margin: -1px 0 0; padding: 0 11px; border-right: 1px solid #aaa; border-radius: 0 0 3px 3px; }

.vsplit { width: 6px; flex: none; display: flex; align-items: center; justify-content: center; }
.vsplit span { width: 1px; height: 17px; background: repeating-linear-gradient(#aaa 0 1px, transparent 1px 3px); }
.work { flex: 1; min-width: 0; display: flex; flex-direction: column; }
.viewport { position: relative; flex: 1; display: flex; background: linear-gradient(#333366, #9696aa); border-bottom: 1px solid #fff; }
.scene { flex: 1; min-width: 0; width: 100%; }
.navcube { position: absolute; top: 0; right: 0; width: 141px; height: 141px; }
.cubetext { font-family: "DejaVu Sans", sans-serif; font-style: italic; fill: #0b0b14; stroke: #0b0b14; stroke-width: 1px; }
.axistext { font-family: "Liberation Sans", sans-serif; }
.axes { position: absolute; right: 0; bottom: 14px; width: 30px; height: 34px; }
.doctabs { display: flex; height: 30px; box-shadow: inset 0 1px #b5b5b5; }
.doctab { display: flex; align-items: center; gap: 4px; box-sizing: border-box; height: 30px; padding: 0 15px 0 11px; border: 1px solid #aaa; border-top: 0; border-radius: 0 0 3px 3px; background: linear-gradient(#efefef, #fafafa); }
.doctab button { margin-left: 4px; }
.doctab button svg { width: 13px; height: 13px; }

.status { display: flex; align-items: center; height: 30px; padding-left: 2px; white-space: nowrap; }
.msg { flex: 1; padding-top: 4px; }
.navstyle { display: flex; align-items: center; gap: 4px; padding-top: 4px; }
.navstyle svg { width: 10px; height: 14px; }
.navstyle .tri { margin-left: -3px; }
.dims { padding: 4px 12px 0 11px; }
.sizegrip { width: 12px; height: 12px; align-self: flex-end; margin: 0 1px 1px 0; }
</style>
